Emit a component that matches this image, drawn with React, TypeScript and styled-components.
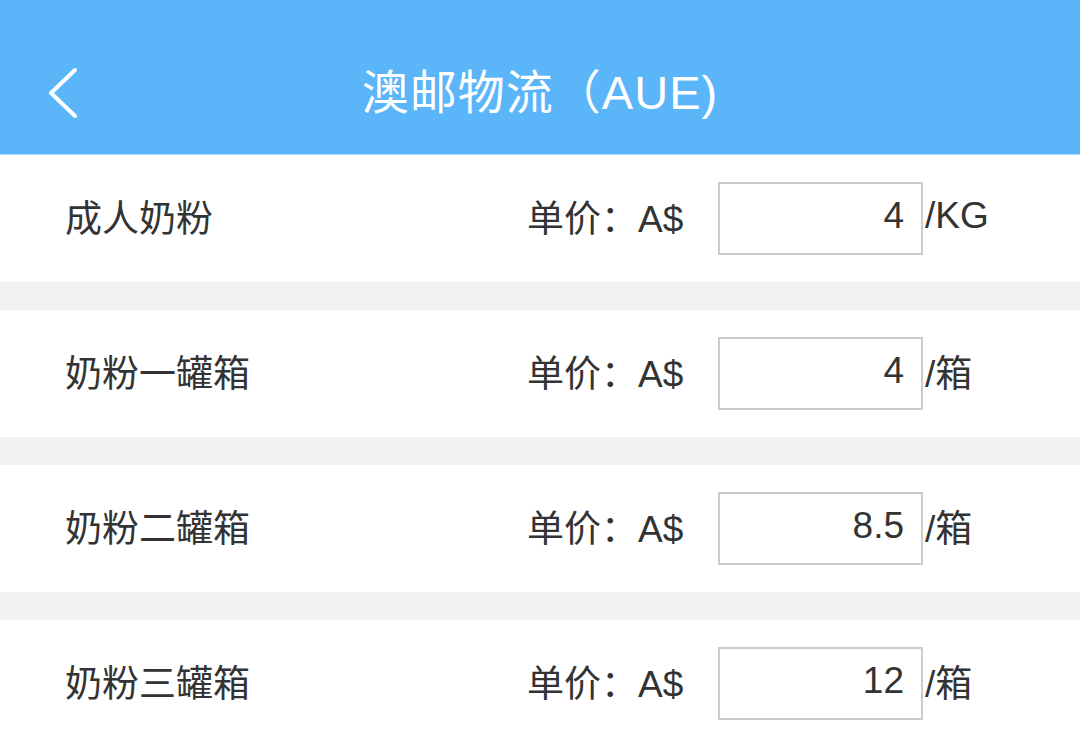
import styled, { createGlobalStyle } from "styled-components";

const GlobalStyle = createGlobalStyle`
	html, body {
		margin: 0;
		padding: 0;
		background: #f2f2f2;
	}
	body {
		font-family: "Liberation Sans", "Noto Sans CJK SC", sans-serif;
		color: #333;
	}
`;

interface PriceItem {
	name: string;
	price: string;
	unit: string;
}

const items: PriceItem[] = [
	{ name: "成人奶粉", price: "4", unit: "/KG" },
	{ name: "奶粉一罐箱", price: "4", unit: "/箱" },
	{ name: "奶粉二罐箱", price: "8.5", unit: "/箱" },
	{ name: "奶粉三罐箱", price: "12", unit: "/箱" },
];

const App: React.FC = () => {
	return (
		<Page>
			<GlobalStyle />
			<Header>
				<BackButton aria-label="back">
					<svg width="34" height="52" viewBox="0 0 34 52">
						<polyline
							points="29,3 5,26 29,49"
							fill="none"
							stroke="white"
							strokeWidth="4"
							strokeLinecap="round"
							strokeLinejoin="round"
						/>
					</svg>
				</BackButton>
				<Title>澳邮物流（AUE)</Title>
			</Header>
			<List>
				{items.map((item) => (
					<Row key={item.name}>
						<Label>{item.name}</Label>
						<Label>单价：A$</Label>
						<PriceInput defaultValue={item.price} />
						<Label $unit>{item.unit}</Label>
					</Row>
				))}
			</List>
		</Page>
	);
};

const Page = styled.div`
	width: 1080px;
	min-height: 745px;
	background: #f2f2f2;
`;

const Header = styled.header`
	position: relative;
	height: 154px;
	background: #5ab5f9;
	border-bottom: 1px solid #a9d8fb;
	display: flex;
	align-items: center;
	justify-content: center;
`;

const BackButton = styled.button`
	position: absolute;
	left: 46px;
	top: 67px;
	padding: 0;
	border: none;
	background: none;
	display: flex;
`;

const Title = styled.h1`
	margin: 0;
	padding-top: 22px;
	font-size: 47px;
	font-weight: normal;
	color: #ffffff;
	letter-spacing: 1px;
`;

const List = styled.div`
	display: flex;
	flex-direction: column;
	gap: 28px;
`;

const Row = styled.div`
	height: 127px;
	background: #ffffff;
	padding-left: 65px;
	display: grid;
	grid-template-columns: 462px 191px 205px auto;
	align-items: center;
	font-size: 37px;
`;

const Label = styled.span<{ $unit?: boolean }>`
	color: #333;
	margin-bottom: 6px;
	padding-left: ${(p) => (p.$unit ? "2px" : "0")};
`;

const PriceInput = styled.input`
	box-sizing: border-box;
	width: 205px;
	height: 73px;
	border: 2px solid #cccccc;
	padding: 0 17px 6px 0;
	text-align: right;
	font: inherit;
	font-size: 37px;
	color: #333;
	background: #fff;
	outline: none;
`;

export default App;
